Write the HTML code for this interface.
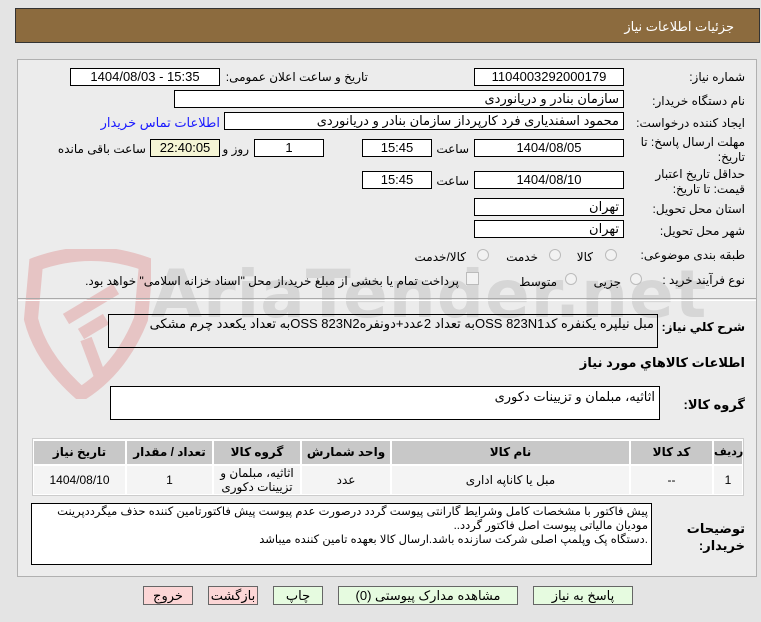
<!DOCTYPE html>
<html><head><meta charset="utf-8"><style>
body{margin:0;width:761px;height:622px;background:#e4e4e4;font-family:"Liberation Sans","DejaVu Sans",sans-serif;font-size:12px;color:#000;position:relative;overflow:hidden}
.a{position:absolute}
.b{position:absolute;background:#fff;border:1px solid #000;box-sizing:border-box;text-align:center;line-height:15px;font-size:13px}
.l{position:absolute;direction:rtl;text-align:right;white-space:nowrap;font-size:12px}
.r{position:absolute;width:10px;height:10px;border-radius:50%;border:1px solid #bbb;background:#f2f2f2}
.btn{position:absolute;border:1px solid #666;box-sizing:border-box;text-align:center;font-size:13px;line-height:17px;height:19px;top:586px}
</style></head><body>
<div class="a" style="left:15px;top:8px;width:745px;height:35px;background:#8c6b3e;border:1px solid #333;box-sizing:border-box"></div>
<div class="l" style="right:27px;top:19px;color:#fff;font-size:13px">جزئیات اطلاعات نیاز</div>
<div class="a" style="left:17px;top:59px;width:740px;height:518px;background:#ececec;border:1px solid #b0b0b0;box-sizing:border-box;overflow:hidden">
<svg class="a" style="left:3px;top:189px" width="130" height="150"><path d="M15 15 Q70 -5 125 15 L120 70 Q100 120 60 145 Q20 110 10 70 Z" fill="none" stroke="#e6c4c4" stroke-width="14"/><path d="M45 70 L95 40 M60 85 L85 70 M65 90 L80 130" stroke="#e6c4c4" stroke-width="12"/></svg>
<div class="a" style="left:133px;top:196px;font-size:66px;font-weight:bold;color:#d6d6d6;letter-spacing:1px;font-family:'DejaVu Sans',sans-serif;white-space:nowrap">AriaTender.net</div>
</div>
<div class="a" style="left:18px;top:298px;width:738px;height:1px;background:#aaa"></div>
<div class="a" style="left:18px;top:300px;width:738px;height:1px;background:#fff"></div>

<div class="l" style="right:16px;top:70px">شماره نیاز:</div>
<div class="b" style="left:474px;top:68px;width:150px;height:18px">1104003292000179</div>
<div class="l" style="right:393px;top:70px">تاریخ و ساعت اعلان عمومی:</div>
<div class="b" style="left:70px;top:68px;width:150px;height:18px">1404/08/03 - 15:35</div>

<div class="l" style="right:16px;top:94px">نام دستگاه خریدار:</div>
<div class="b" style="left:174px;top:90px;width:450px;height:18px;text-align:right;padding-right:4px;direction:rtl">سازمان بنادر و دریانوردی</div>

<div class="l" style="right:16px;top:116px">ایجاد کننده درخواست:</div>
<div class="b" style="left:224px;top:112px;width:400px;height:18px;text-align:right;padding-right:4px;direction:rtl">محمود اسفندیاری فرد کارپرداز سازمان بنادر و دریانوردی</div>
<div class="l" style="right:541px;top:115px;color:#1a1aff;font-size:13px">اطلاعات تماس خریدار</div>

<div class="l" style="right:16px;top:135px;line-height:15px">مهلت ارسال پاسخ: تا<br>تاریخ:</div>
<div class="b" style="left:474px;top:139px;width:150px;height:18px">1404/08/05</div>
<div class="l" style="right:292px;top:142px">ساعت</div>
<div class="b" style="left:362px;top:139px;width:70px;height:18px">15:45</div>
<div class="b" style="left:254px;top:139px;width:70px;height:18px">1</div>
<div class="l" style="right:512px;top:142px">روز و</div>
<div class="b" style="left:150px;top:139px;width:70px;height:18px;background:#f5f5d5">22:40:05</div>
<div class="l" style="right:615px;top:142px">ساعت باقی مانده</div>

<div class="l" style="right:16px;top:167px;line-height:15px">حداقل تاریخ اعتبار<br>قیمت: تا تاریخ:</div>
<div class="b" style="left:474px;top:171px;width:150px;height:18px">1404/08/10</div>
<div class="l" style="right:292px;top:174px">ساعت</div>
<div class="b" style="left:362px;top:171px;width:70px;height:18px">15:45</div>

<div class="l" style="right:16px;top:202px">استان محل تحویل:</div>
<div class="b" style="left:474px;top:198px;width:150px;height:18px;text-align:right;padding-right:4px">تهران</div>
<div class="l" style="right:16px;top:224px">شهر محل تحویل:</div>
<div class="b" style="left:474px;top:220px;width:150px;height:18px;text-align:right;padding-right:4px">تهران</div>

<div class="l" style="right:16px;top:248px">طبقه بندی موضوعی:</div>
<div class="r" style="left:605px;top:249px"></div><div class="l" style="right:168px;top:250px">کالا</div>
<div class="r" style="left:549px;top:249px"></div><div class="l" style="right:223px;top:250px">خدمت</div>
<div class="r" style="left:477px;top:249px"></div><div class="l" style="right:295px;top:250px">کالا/خدمت</div>

<div class="l" style="right:16px;top:273px">نوع فرآیند خرید :</div>
<div class="r" style="left:630px;top:273px"></div><div class="l" style="right:140px;top:275px">جزیی</div>
<div class="r" style="left:565px;top:273px"></div><div class="l" style="right:204px;top:275px">متوسط</div>
<div class="a" style="left:466px;top:272px;width:11px;height:11px;border:1px solid #bbb;background:#f2f2f2"></div>
<div class="l" style="right:302px;top:274px">پرداخت تمام یا بخشی از مبلغ خرید،از محل "اسناد خزانه اسلامی" خواهد بود.</div>

<div class="l" style="right:16px;top:320px;font-weight:bold">شرح کلي نياز:</div>
<div class="b" style="left:108px;top:314px;width:550px;height:34px;background:transparent;text-align:right;padding-right:3px;direction:rtl;line-height:18px">مبل نیلپره یکنفره کدOSS 823N1به تعداد 2عدد+دونفرهOSS 823N2به تعداد یکعدد چرم مشکی</div>
<div class="l" style="right:16px;top:355px;font-weight:bold;font-size:13px">اطلاعات کالاهاي مورد نياز</div>
<div class="l" style="right:16px;top:397px;font-weight:bold;font-size:13px">گروه کالا:</div>
<div class="b" style="left:110px;top:386px;width:550px;height:34px;text-align:right;padding-right:4px;direction:rtl;line-height:20px">اثاثیه، مبلمان و تزیینات دکوری</div>

<div class="a" style="left:32px;top:438px;width:712px;height:58px;background:#fff;border:1px solid #ccc;box-sizing:border-box"></div>
<div class="a" style="left:34px;top:441px;width:708px;height:53px;font-size:12px;text-align:center">
<div class="a" style="left:680px;top:0;width:28px;height:23px;background:#c8c8c8;line-height:23px;font-weight:bold;font-size:11px">ردیف</div>
<div class="a" style="left:597px;top:0;width:81px;height:23px;background:#c8c8c8;line-height:23px;font-weight:bold">کد کالا</div>
<div class="a" style="left:358px;top:0;width:237px;height:23px;background:#c8c8c8;line-height:23px;font-weight:bold">نام کالا</div>
<div class="a" style="left:268px;top:0;width:88px;height:23px;background:#c8c8c8;line-height:23px;font-weight:bold">واحد شمارش</div>
<div class="a" style="left:180px;top:0;width:86px;height:23px;background:#c8c8c8;line-height:23px;font-weight:bold">گروه کالا</div>
<div class="a" style="left:93px;top:0;width:85px;height:23px;background:#c8c8c8;line-height:23px;font-weight:bold">تعداد / مقدار</div>
<div class="a" style="left:0;top:0;width:91px;height:23px;background:#c8c8c8;line-height:23px;font-weight:bold">تاریخ نیاز</div>
<div class="a" style="left:680px;top:25px;width:28px;height:28px;background:#f4f4f4;line-height:28px">1</div>
<div class="a" style="left:597px;top:25px;width:81px;height:28px;background:#f4f4f4;line-height:28px">--</div>
<div class="a" style="left:358px;top:25px;width:237px;height:28px;background:#f4f4f4;line-height:28px">مبل یا کاناپه اداری</div>
<div class="a" style="left:268px;top:25px;width:88px;height:28px;background:#f4f4f4;line-height:28px">عدد</div>
<div class="a" style="left:180px;top:25px;width:86px;height:28px;background:#f4f4f4;line-height:14px">اثاثیه، مبلمان و تزیینات دکوری</div>
<div class="a" style="left:93px;top:25px;width:85px;height:28px;background:#f4f4f4;line-height:28px">1</div>
<div class="a" style="left:0;top:25px;width:91px;height:28px;background:#f4f4f4;line-height:28px">1404/08/10</div>
</div>

<div class="l" style="right:16px;top:520px;font-weight:bold;font-size:13px;line-height:17px">توضیحات<br>خریدار:</div>
<div class="b" style="left:31px;top:503px;width:621px;height:62px;text-align:right;padding-right:3px;direction:rtl;line-height:14px;font-size:11.5px;padding-top:1px;white-space:nowrap;overflow:hidden">پیش فاکتور با مشخصات کامل وشرایط گارانتی پیوست گردد درصورت عدم پیوست پیش فاکتورتامین کننده حذف میگرددپرینت<br>مودیان مالیاتی پیوست اصل فاکتور گردد..<br>.دستگاه پک وپلمپ اصلی شرکت سازنده باشد.ارسال کالا بعهده تامین کننده میباشد</div>

<div class="btn" style="left:143px;width:50px;background:#fcd6d6">خروج</div>
<div class="btn" style="left:208px;width:50px;background:#fcd6d6">بازگشت</div>
<div class="btn" style="left:273px;width:50px;background:#e6fbe0">چاپ</div>
<div class="btn" style="left:338px;width:180px;background:#e6fbe0">مشاهده مدارک پیوستی (0)</div>
<div class="btn" style="left:533px;width:100px;background:#e6fbe0">پاسخ به نیاز</div>
</body></html>
